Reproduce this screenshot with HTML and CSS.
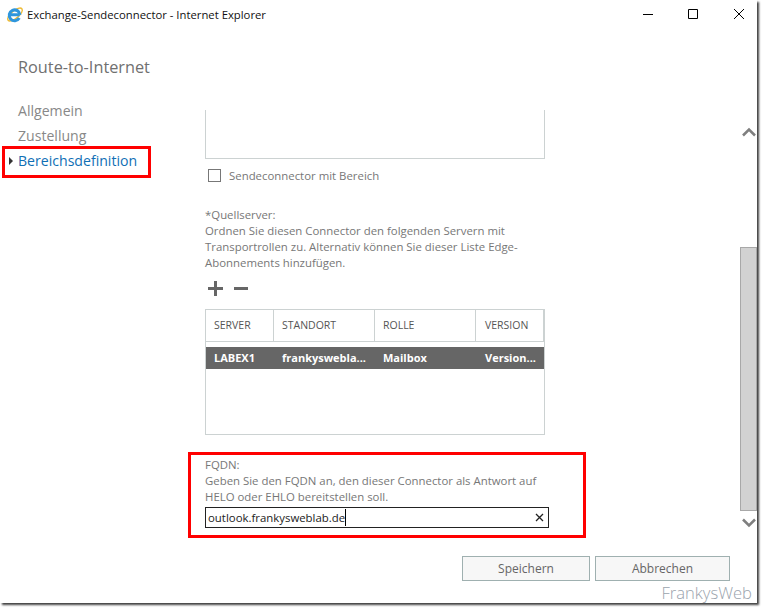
FILE: index.html
```html
<!DOCTYPE html>
<html lang="de">
<head>
    <meta charset="UTF-8">
    <title>Exchange-Sendeconnector - Internet Explorer</title>
    <link rel="stylesheet" href="styles.css">
</head>
<body>
    <div class="window">
        <div class="titlebar">
            <svg class="ie-icon" width="18" height="18" viewBox="0 0 18 18">
                <ellipse cx="9" cy="9.5" rx="9" ry="3.8" transform="rotate(-40 9 9.5)" fill="none" stroke="#eebb35" stroke-width="1.4"/>
                <path d="M4.5 9.8h9.2M13.3 13a5.4 5.4 0 1 1 .7-3.2" fill="none" stroke="#2f96dc" stroke-width="3"/>
            </svg>
            <span class="title-text">Exchange-Sendeconnector - Internet Explorer</span>
            <div class="win-buttons">
                <svg width="10" height="10" viewBox="0 0 10 10"><path d="M0 5.5h10" stroke="#000" fill="none"/></svg>
                <svg width="10" height="10" viewBox="0 0 10 10"><path d="M.5.5h9v9h-9z" stroke="#000" fill="none"/></svg>
                <svg width="10" height="10" viewBox="0 0 10 10"><path d="M0 0l10 10M10 0L0 10" stroke="#000" fill="none"/></svg>
            </div>
        </div>

        <h1 class="page-title">Route-to-Internet</h1>

        <div class="content">
            <ul class="side-nav">
                <li>Allgemein</li>
                <li>Zustellung</li>
                <li class="active">Bereichsdefinition</li>
            </ul>

            <div class="form-area">
                <div class="scope-list"></div>

                <label class="check-row">
                    <span class="checkbox"></span>
                    Sendeconnector mit Bereich
                </label>

                <div class="source-text">
                    <div>*Quellserver:</div>
                    <div>Ordnen Sie diesen Connector den folgenden Servern mit Transportrollen zu. Alternativ können Sie dieser Liste Edge-Abonnements hinzufügen.</div>
                </div>

                <div class="tools">
                    <svg width="15" height="15" viewBox="0 0 15 15"><path d="M6 0h3v6h6v3H9v6H6V9H0V6h6z" fill="#666"/></svg>
                    <svg width="14" height="15" viewBox="0 0 14 15"><path d="M0 6h14v3H0z" fill="#666"/></svg>
                </div>

                <div class="server-table">
                    <div class="table-head">
                        <div class="col-server">SERVER</div>
                        <div class="col-site">STANDORT</div>
                        <div class="col-role">ROLLE</div>
                        <div class="col-version">VERSION</div>
                    </div>
                    <div class="table-row">
                        <div class="col-server">LABEX1</div>
                        <div class="col-site">frankyswebla...</div>
                        <div class="col-role">Mailbox</div>
                        <div class="col-version">Version...</div>
                    </div>
                </div>

                <div class="fqdn-box">
                    <div>FQDN:</div>
                    <div class="fqdn-help">Geben Sie den FQDN an, den dieser Connector als Antwort auf HELO oder EHLO bereitstellen soll.</div>
                    <div class="fqdn-input">
                        <span class="fqdn-value">outlook.frankysweblab.de</span>
                        <svg width="9" height="9" viewBox="0 0 9 9"><path d="M1 1l7 7M8 1L1 8" stroke="#222" stroke-width="1.3" fill="none"/></svg>
                    </div>
                </div>
            </div>

            <div class="scrollbar">
                <svg class="arrow" width="14" height="10" viewBox="0 0 14 10"><path d="M1 8.5L7 2.5l6 6" fill="none" stroke="#7f7f7f" stroke-width="2.5"/></svg>
                <div class="scroll-track"><div class="scroll-thumb"></div></div>
                <svg class="arrow arrow-down" width="14" height="10" viewBox="0 0 14 10"><path d="M1 1.5L7 7.5l6-6" fill="none" stroke="#7f7f7f" stroke-width="2.5"/></svg>
            </div>
        </div>

        <div class="footer">
            <button class="btn btn-save">Speichern</button>
            <button class="btn btn-cancel">Abbrechen</button>
        </div>
        <div class="watermark">FrankysWeb</div>
    </div>
</body>
</html>
```

FILE: styles.css
```css
html, body {
    margin: 0;
    padding: 0;
    background: #fff;
}

body {
    width: 762px;
    height: 608px;
    overflow: hidden;
    font-family: "Open Sans", "Noto Sans", sans-serif;
    font-size: 11.4px;
    color: #777;
}

.window {
    position: relative;
    width: 757px;
    height: 603px;
    background: white;
    box-shadow: 2px 2px 2px rgba(0, 0, 0, 0.75);
}

.titlebar {
    display: flex;
    align-items: center;
    height: 28px;
    padding-left: 6px;
    color: #111;
    font-size: 11.3px;
}

.ie-icon {
    margin-right: 3px;
}

.win-buttons {
    display: flex;
    gap: 35px;
    margin-left: auto;
    margin-right: 13px;
}

.win-buttons svg:last-child {
    margin-left: 1px;
}

.page-title {
    margin: 27px 0 0 18px;
    font-size: 16.3px;
    line-height: 24px;
    font-weight: normal;
    color: #707070;
}

.content {
    display: flex;
    margin-top: 19px;
    height: 439px;
}

.side-nav {
    list-style: none;
    margin: 0 0 0 3px;
    padding: 0;
    width: 202px;
    font-size: 14.1px;
    line-height: 25px;
    color: #888;
}

.side-nav li {
    padding-left: 15px;
}

.side-nav .active {
    position: relative;
    width: 149px;
    height: 32px;
    line-height: 24px;
    padding-left: 13px;
    margin-top: -2px;
    margin-left: -1px;
    border: 3px solid #f00;
    box-sizing: border-box;
    color: #0f6fb5;
}

.side-nav .active::before {
    content: "";
    position: absolute;
    left: 4px;
    top: 8px;
    border-left: 4px solid #333;
    border-top: 4px solid transparent;
    border-bottom: 4px solid transparent;
}

.form-area {
    width: 340px;
    padding-top: 12px;
}

.scope-list {
    height: 48px;
    border: 1px solid #ccd2d2;
    border-top: none;
}

.check-row {
    display: flex;
    align-items: center;
    gap: 8px;
    margin: 8px 0 0 3px;
    line-height: 17px;
}

.checkbox {
    width: 11px;
    height: 11px;
    border: 1px solid #777;
}

.source-text {
    margin-top: 23px;
    line-height: 16px;
    width: 330px;
}

.tools {
    display: flex;
    gap: 11px;
    margin: 10px 0 0 3px;
}

.server-table {
    height: 124px;
    margin-top: 13px;
    border: 1px solid #ccd2d2;
}

.table-head {
    display: flex;
    height: 31px;
    border-bottom: 1px solid #ccd2d2;
    line-height: 31px;
    font-size: 10.5px;
    color: #555;
}

.table-head > div {
    border-right: 1px solid #ccd2d2;
    box-sizing: border-box;
}

.table-row {
    display: flex;
    height: 22px;
    margin-top: 5px;
    line-height: 22px;
    background: #666;
    color: white;
    font-weight: bold;
    font-size: 11px;
}

.col-server {
    width: 68px;
    padding-left: 8px;
    box-sizing: border-box;
}

.col-site {
    width: 101px;
    padding-left: 8px;
    box-sizing: border-box;
}

.col-role {
    width: 101px;
    padding-left: 8px;
    box-sizing: border-box;
}

.col-version {
    width: 68px;
    padding-left: 9px;
    box-sizing: border-box;
}

.fqdn-box {
    width: 398px;
    height: 86px;
    margin: 17px 0 0 -17px;
    padding: 2px 0 0 14px;
    border: 3px solid #f00;
    box-sizing: border-box;
    line-height: 16px;
}

.fqdn-help {
    width: 345px;
}

.fqdn-input {
    display: flex;
    align-items: center;
    justify-content: space-between;
    width: 344px;
    height: 21px;
    padding: 0 4px 0 2px;
    margin-top: 2px;
    border: 1px solid #222;
    box-sizing: border-box;
    color: #222;
}

.fqdn-value {
    border-right: 1px solid #000;
    line-height: 17px;
}

.scrollbar {
    display: flex;
    flex-direction: column;
    align-items: center;
    width: 17px;
    height: 430px;
    padding-top: 29px;
    box-sizing: border-box;
    margin-left: auto;
}

.arrow {
    flex: none;
}

.arrow-down {
    margin-top: 7px;
}

.scroll-track {
    flex: 1;
    width: 100%;
    display: flex;
    align-items: flex-end;
}

.scroll-thumb {
    width: 17px;
    height: 264px;
    background: #d2d2d2;
    border: 1px solid #a8a8a8;
    box-sizing: border-box;
}

.footer {
    display: flex;
    justify-content: flex-end;
    gap: 5px;
    padding-right: 27px;
    margin-top: 19px;
}

.btn {
    height: 25px;
    padding: 0;
    background: #f7f7f7;
    border: 1px solid #9fb0b0;
    font-family: inherit;
    font-size: 12px;
    color: #666;
}

.btn-save {
    width: 128px;
}

.btn-cancel {
    width: 135px;
}

.watermark {
    position: absolute;
    right: 5px;
    bottom: 1px;
    font-size: 16.6px;
    font-weight: 300;
    line-height: 18px;
    color: #9aa3ad;
}
```
